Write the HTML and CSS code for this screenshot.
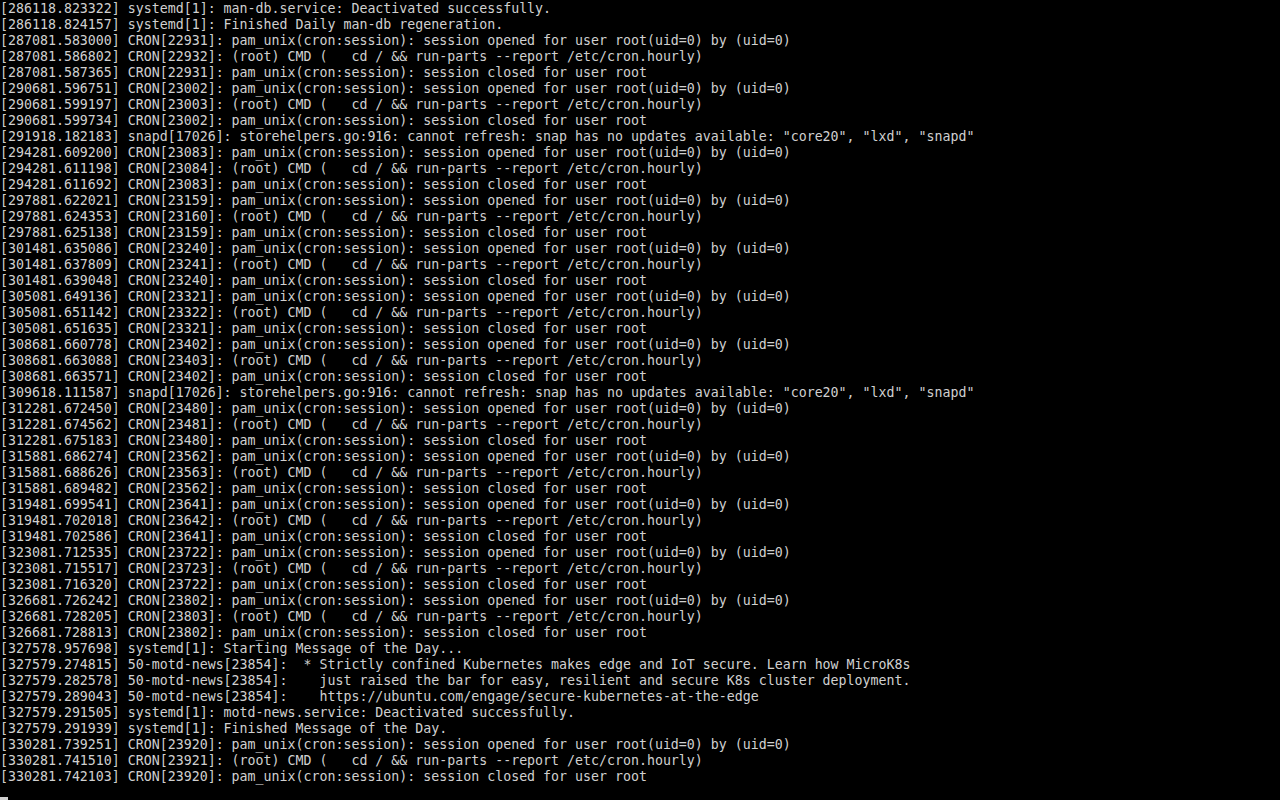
FILE: index.html
```html
<!DOCTYPE html>
<html>
<head>
<meta charset="utf-8">
<link rel="stylesheet" href="styles.css">
</head>
<body>
<div class="console">
<pre class="log">[286118.823322] systemd[1]: man-db.service: Deactivated successfully.
[286118.824157] systemd[1]: Finished Daily man-db regeneration.
[287081.583000] CRON[22931]: pam_unix(cron:session): session opened for user root(uid=0) by (uid=0)
[287081.586802] CRON[22932]: (root) CMD (   cd / &amp;&amp; run-parts --report /etc/cron.hourly)
[287081.587365] CRON[22931]: pam_unix(cron:session): session closed for user root
[290681.596751] CRON[23002]: pam_unix(cron:session): session opened for user root(uid=0) by (uid=0)
[290681.599197] CRON[23003]: (root) CMD (   cd / &amp;&amp; run-parts --report /etc/cron.hourly)
[290681.599734] CRON[23002]: pam_unix(cron:session): session closed for user root
[291918.182183] snapd[17026]: storehelpers.go:916: cannot refresh: snap has no updates available: "core20", "lxd", "snapd"
[294281.609200] CRON[23083]: pam_unix(cron:session): session opened for user root(uid=0) by (uid=0)
[294281.611198] CRON[23084]: (root) CMD (   cd / &amp;&amp; run-parts --report /etc/cron.hourly)
[294281.611692] CRON[23083]: pam_unix(cron:session): session closed for user root
[297881.622021] CRON[23159]: pam_unix(cron:session): session opened for user root(uid=0) by (uid=0)
[297881.624353] CRON[23160]: (root) CMD (   cd / &amp;&amp; run-parts --report /etc/cron.hourly)
[297881.625138] CRON[23159]: pam_unix(cron:session): session closed for user root
[301481.635086] CRON[23240]: pam_unix(cron:session): session opened for user root(uid=0) by (uid=0)
[301481.637809] CRON[23241]: (root) CMD (   cd / &amp;&amp; run-parts --report /etc/cron.hourly)
[301481.639048] CRON[23240]: pam_unix(cron:session): session closed for user root
[305081.649136] CRON[23321]: pam_unix(cron:session): session opened for user root(uid=0) by (uid=0)
[305081.651142] CRON[23322]: (root) CMD (   cd / &amp;&amp; run-parts --report /etc/cron.hourly)
[305081.651635] CRON[23321]: pam_unix(cron:session): session closed for user root
[308681.660778] CRON[23402]: pam_unix(cron:session): session opened for user root(uid=0) by (uid=0)
[308681.663088] CRON[23403]: (root) CMD (   cd / &amp;&amp; run-parts --report /etc/cron.hourly)
[308681.663571] CRON[23402]: pam_unix(cron:session): session closed for user root
[309618.111587] snapd[17026]: storehelpers.go:916: cannot refresh: snap has no updates available: "core20", "lxd", "snapd"
[312281.672450] CRON[23480]: pam_unix(cron:session): session opened for user root(uid=0) by (uid=0)
[312281.674562] CRON[23481]: (root) CMD (   cd / &amp;&amp; run-parts --report /etc/cron.hourly)
[312281.675183] CRON[23480]: pam_unix(cron:session): session closed for user root
[315881.686274] CRON[23562]: pam_unix(cron:session): session opened for user root(uid=0) by (uid=0)
[315881.688626] CRON[23563]: (root) CMD (   cd / &amp;&amp; run-parts --report /etc/cron.hourly)
[315881.689482] CRON[23562]: pam_unix(cron:session): session closed for user root
[319481.699541] CRON[23641]: pam_unix(cron:session): session opened for user root(uid=0) by (uid=0)
[319481.702018] CRON[23642]: (root) CMD (   cd / &amp;&amp; run-parts --report /etc/cron.hourly)
[319481.702586] CRON[23641]: pam_unix(cron:session): session closed for user root
[323081.712535] CRON[23722]: pam_unix(cron:session): session opened for user root(uid=0) by (uid=0)
[323081.715517] CRON[23723]: (root) CMD (   cd / &amp;&amp; run-parts --report /etc/cron.hourly)
[323081.716320] CRON[23722]: pam_unix(cron:session): session closed for user root
[326681.726242] CRON[23802]: pam_unix(cron:session): session opened for user root(uid=0) by (uid=0)
[326681.728205] CRON[23803]: (root) CMD (   cd / &amp;&amp; run-parts --report /etc/cron.hourly)
[326681.728813] CRON[23802]: pam_unix(cron:session): session closed for user root
[327578.957698] systemd[1]: Starting Message of the Day...
[327579.274815] 50-motd-news[23854]:  * Strictly confined Kubernetes makes edge and IoT secure. Learn how MicroK8s
[327579.282578] 50-motd-news[23854]:    just raised the bar for easy, resilient and secure K8s cluster deployment.
[327579.289043] 50-motd-news[23854]:    https://ubuntu.com/engage/secure-kubernetes-at-the-edge
[327579.291505] systemd[1]: motd-news.service: Deactivated successfully.
[327579.291939] systemd[1]: Finished Message of the Day.
[330281.739251] CRON[23920]: pam_unix(cron:session): session opened for user root(uid=0) by (uid=0)
[330281.741510] CRON[23921]: (root) CMD (   cd / &amp;&amp; run-parts --report /etc/cron.hourly)
[330281.742103] CRON[23920]: pam_unix(cron:session): session closed for user root</pre>
<div class="cursor-line"><span class="cursor"></span></div>
</div>
</body>
</html>
```

FILE: styles.css
```css
html, body {
  margin: 0;
  padding: 0;
  background: #000000;
  width: 1280px;
  height: 800px;
  overflow: hidden;
}

.console {
  display: flex;
  flex-direction: column;
  width: 1280px;
  height: 800px;
  background: #000000;
}

.log {
  margin: 0;
  padding: 1px 0 0 0;
  font-family: "DejaVu Sans Mono", "Liberation Mono", monospace;
  font-size: 13.288px;
  line-height: 16px;
  color: #d0d0d0;
  white-space: pre;
}

.cursor-line {
  height: 15px;
  display: flex;
  align-items: flex-end;
}

.cursor {
  display: block;
  width: 8px;
  height: 3px;
  background: #d0d0d0;
}
```
